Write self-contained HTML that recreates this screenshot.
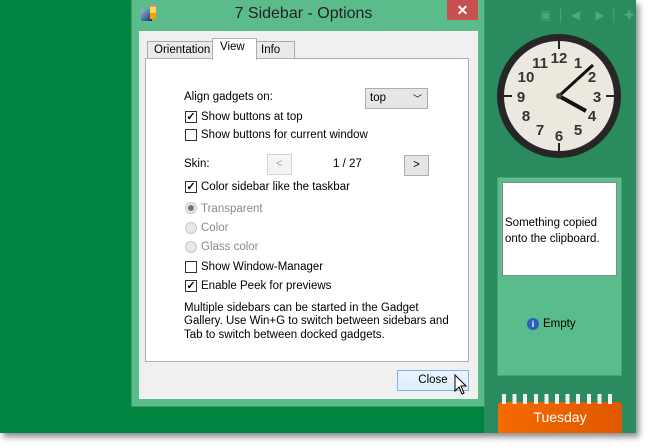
<!DOCTYPE html>
<html><head><meta charset="utf-8"><style>
*{margin:0;padding:0;box-sizing:border-box}
body{width:650px;height:448px;background:#fff;position:relative;overflow:hidden;font-family:"Liberation Sans",sans-serif;font-size:11.5px;color:#000}
.a{position:absolute}
.cb{position:absolute;width:12px;height:12px;border:1px solid #333;background:#fff;font-size:11px;line-height:10px;text-align:center;font-weight:bold}
.rb{position:absolute;width:12px;height:12px;border:1px solid #c8c8c8;border-radius:50%;background:#e8e8e8}
.gray{color:#8a8a8a}
</style></head><body>
<div class="a" style="left:0;top:0;width:636px;height:433px;background:#00843f;box-shadow:3px 4px 6px rgba(0,0,0,.45)"></div>
<div class="a" style="left:484px;top:0;width:152px;height:433px;background:#2a8c5e"></div>
<div class="a" style="left:540px;top:8px;color:#4fa77c;font-size:12px;letter-spacing:6px">▣│◀ ▶│✚</div>
<svg class="a" style="left:496px;top:33px" width="126" height="126" viewBox="0 0 126 126">
<circle cx="63" cy="63" r="62" fill="#262626"/>
<circle cx="63" cy="63" r="55" fill="#ebe9dd"/>
<g stroke="#222" stroke-width="2">
<line x1="63" y1="8" x2="63" y2="16"/><line x1="63" y1="110" x2="63" y2="118"/><line x1="8" y1="63" x2="16" y2="63"/><line x1="110" y1="63" x2="118" y2="63"/></g>
<g font-family="Liberation Sans Narrow,Liberation Sans" font-size="15" font-weight="bold" fill="#333" text-anchor="middle">
<text x="63" y="30">12</text><text x="82" y="35">1</text><text x="96" y="49">2</text><text x="101" y="69">3</text><text x="96" y="88">4</text><text x="82" y="102">5</text><text x="63" y="108">6</text><text x="44" y="102">7</text><text x="30" y="88">8</text><text x="25" y="69">9</text><text x="30" y="49">10</text><text x="44" y="35">11</text></g>
<line x1="63" y1="63" x2="97" y2="32" stroke="#111" stroke-width="3"/>
<line x1="63" y1="63" x2="90" y2="78" stroke="#111" stroke-width="4"/>
<circle cx="63" cy="63" r="3" fill="#444"/>
</svg>
<div class="a" style="left:497px;top:177px;width:125px;height:199px;background:#5abb8c;border:1px solid #4aa078"></div>
<div class="a" style="left:502px;top:182px;width:115px;height:94px;background:#fff;border:1px solid #888;padding:32px 0 0 2px;font-size:11.5px;line-height:16px">Something copied onto the clipboard.</div>
<div class="a" style="left:527px;top:318px;width:12px;height:12px;border-radius:50%;background:#2a5fc0;color:#fff;font-size:9px;text-align:center;line-height:12px;font-weight:bold">i</div>
<div class="a" style="left:543px;top:318px">Empty</div>
<div class="a" style="left:498px;top:402px;width:124px;height:31px;background:linear-gradient(90deg,#f56a00,#e05800);border-radius:4px 4px 0 0;color:#fff;font-size:14px;text-align:center;padding-top:7px">Tuesday</div>
<div class="a" style="left:502px;top:394px;width:116px;height:10px;background:repeating-linear-gradient(90deg,#eee 0 4px,transparent 4px 10.6px)"></div>
<div class="a" style="left:131px;top:0;width:354px;height:407px;background:#5cbb8b;border:1px solid #3e9a6c;border-top:none"></div>
<div class="a" style="left:141px;top:9px;width:11px;height:12px;background:linear-gradient(135deg,#9bd,#136)"></div>
<div class="a" style="left:150px;top:5px;width:6px;height:14px;background:#f7a"></div>
<div class="a" style="left:150px;top:7px;width:6px;height:6px;background:#fd4"></div>
<div class="a" style="left:150px;top:13px;width:6px;height:6px;background:#f90"></div>
<div class="a" style="left:131px;top:5px;width:345px;text-align:center;font-size:16px;color:#222">7 Sidebar - Options</div>
<div class="a" style="left:447px;top:0;width:31px;height:20px;background:#c75050;color:#fff;text-align:center;font-size:14px;line-height:20px;font-weight:bold">✕</div>
<div class="a" style="left:139px;top:31px;width:339px;height:368px;background:#f0f0f0"></div>
<div class="a" style="left:147px;top:41px;width:66px;height:18px;border:1px solid #aaa;background:#eaeaea;padding:2px 0 0 6px">Orientation</div>
<div class="a" style="left:256px;top:41px;width:39px;height:18px;border:1px solid #aaa;background:#eaeaea;padding:2px 0 0 4px">Info</div>
<div class="a" style="left:145px;top:58px;width:324px;height:304px;background:#fff;border:1px solid #adadad"></div>
<div class="a" style="left:212px;top:38px;width:45px;height:22px;border:1px solid #adadad;border-bottom:none;background:#fff;padding:2px 0 0 7px">View</div>
<div class="a" style="left:184px;top:91px">Align gadgets on:</div>
<div class="a" style="left:365px;top:88px;width:63px;height:21px;border:1px solid #adadad;background:#e6e6e6;padding:3px 0 0 4px">top<span style="position:absolute;right:5px;top:3px;font-size:9px">﹀</span></div>
<div class="cb" style="left:185px;top:111px">✓</div><div class="a" style="left:201px;top:111px">Show buttons at top</div>
<div class="cb" style="left:185px;top:129px"></div><div class="a" style="left:201px;top:129px">Show buttons for current window</div>
<div class="a" style="left:184px;top:158px">Skin:</div>
<div class="a" style="left:267px;top:154px;width:25px;height:21px;border:1px solid #d5d5d5;background:#f4f4f4;color:#aaa;text-align:center;line-height:19px">&lt;</div>
<div class="a" style="left:333px;top:158px">1 / 27</div>
<div class="a" style="left:404px;top:155px;width:25px;height:21px;border:1px solid #adadad;background:#e5e5e5;text-align:center;line-height:19px">&gt;</div>
<div class="cb" style="left:185px;top:181px">✓</div><div class="a" style="left:201px;top:181px">Color sidebar like the taskbar</div>
<div class="rb" style="left:185px;top:202px"><div style="width:6px;height:6px;border-radius:50%;background:#777;margin:2px"></div></div><div class="a gray" style="left:201px;top:203px">Transparent</div>
<div class="rb" style="left:185px;top:222px"></div><div class="a gray" style="left:201px;top:222px">Color</div>
<div class="rb" style="left:185px;top:241px"></div><div class="a gray" style="left:201px;top:241px">Glass color</div>
<div class="cb" style="left:185px;top:261px"></div><div class="a" style="left:201px;top:261px">Show Window-Manager</div>
<div class="cb" style="left:185px;top:280px">✓</div><div class="a" style="left:201px;top:280px">Enable Peek for previews</div>
<div class="a" style="left:184px;top:302px;line-height:13.3px;width:290px">Multiple sidebars can be started in the Gadget<br>Gallery. Use Win+G to switch between sidebars and<br>Tab to switch between docked gadgets.</div>
<div class="a" style="left:397px;top:370px;width:72px;height:21px;border:1px solid #7eb4ea;background:linear-gradient(#ecf4fc,#dcecfc);text-align:center;line-height:19px">Close</div>
<svg class="a" style="left:454px;top:374px" width="14" height="22" viewBox="0 0 14 22"><path d="M1 1 L1 17 L5 13 L8 20 L10 19 L7 12 L12 12 Z" fill="#fff" stroke="#000" stroke-width="1"/></svg>
</body></html>
